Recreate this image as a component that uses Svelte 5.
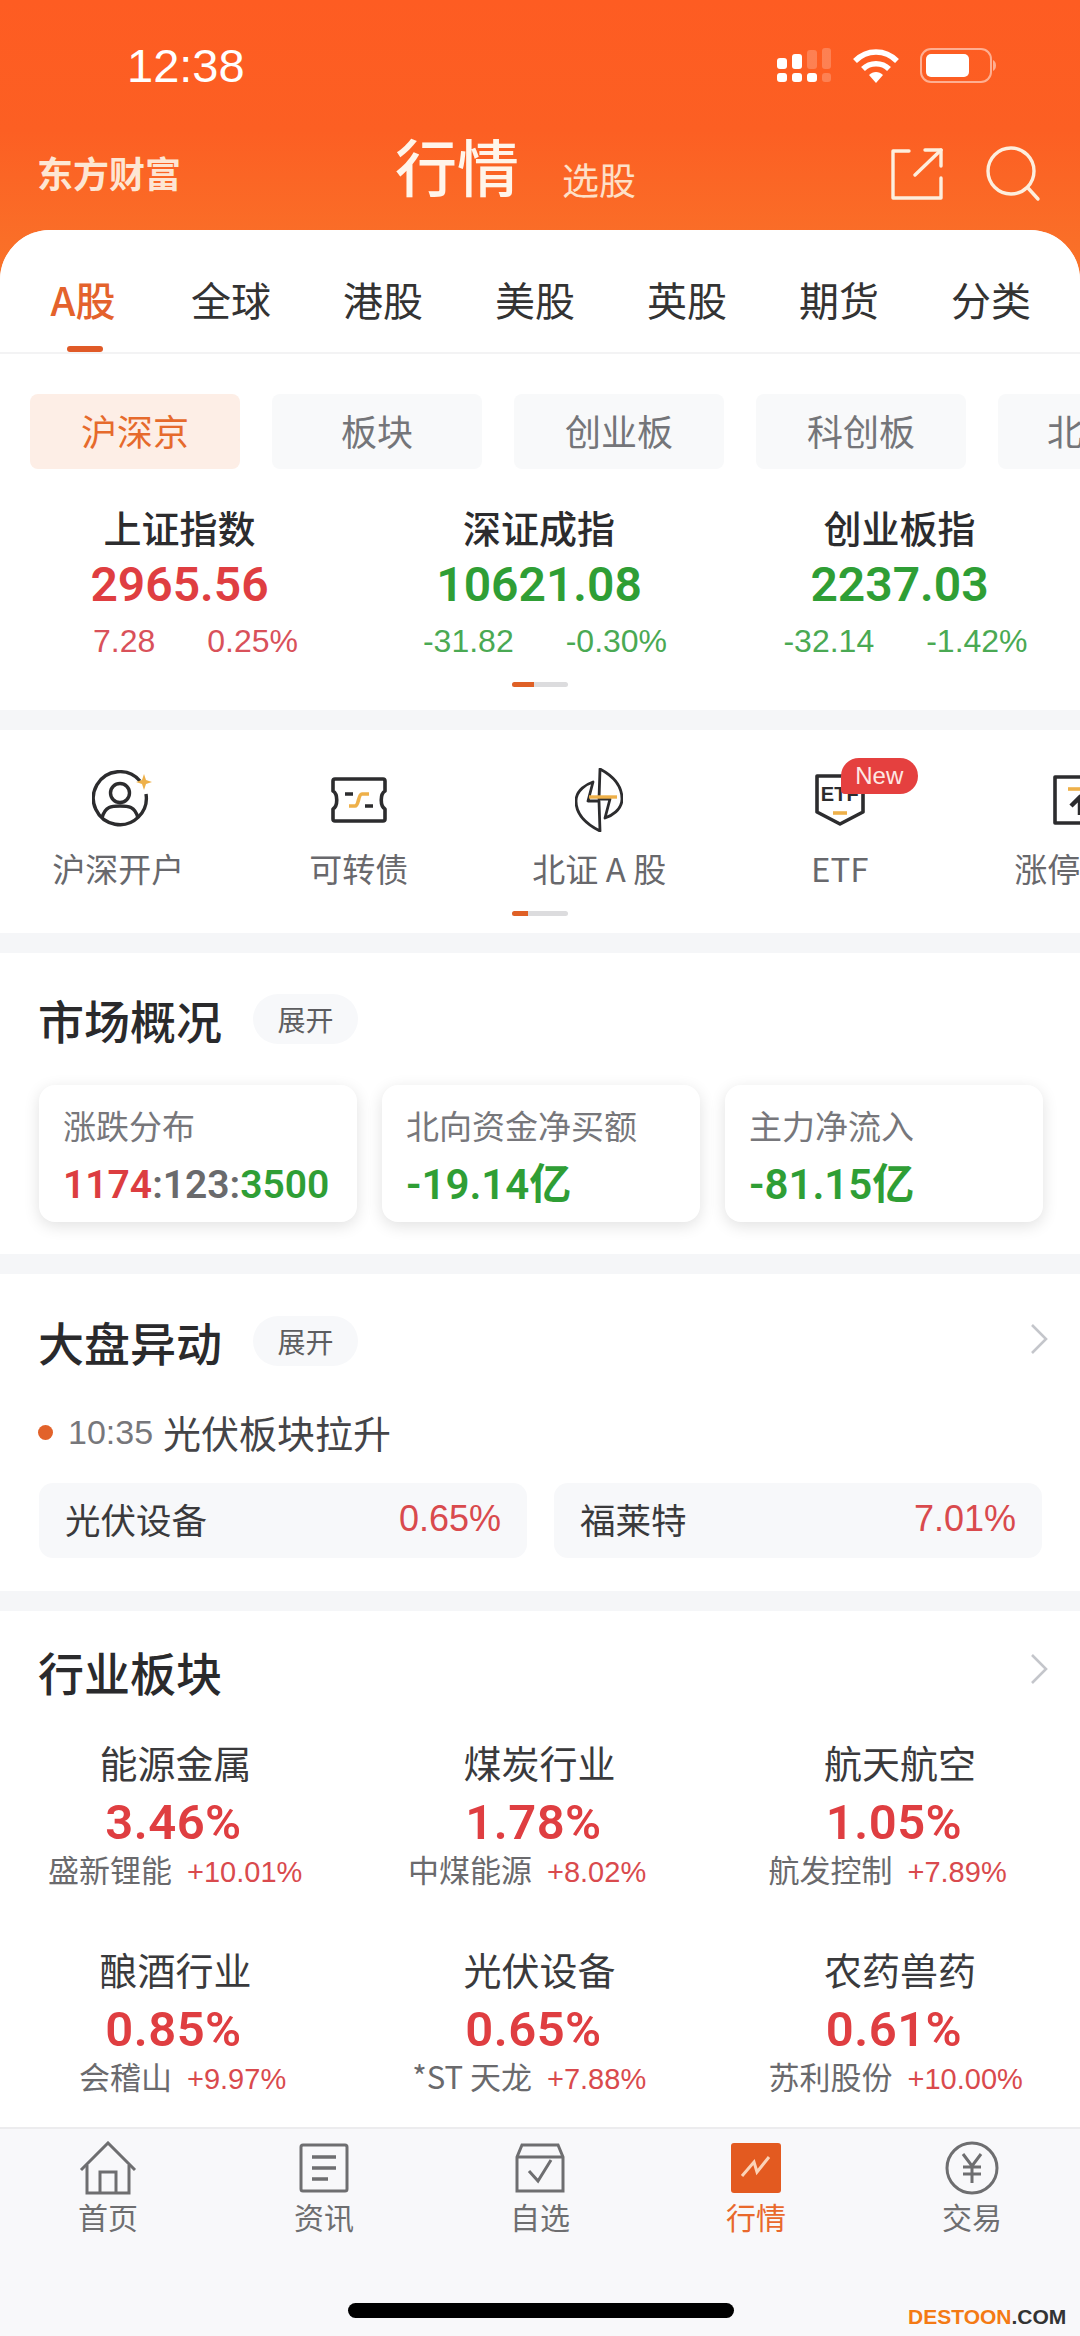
<script>
  const tabs = ['A股', '全球', '港股', '美股', '英股', '期货', '分类'];
  const chips = ['沪深京', '板块', '创业板', '科创板', '北证50'];
  const indexes = [
    { name: '上证指数', value: '2965.56', a: '7.28', b: '0.25%', c: 'up' },
    { name: '深证成指', value: '10621.08', a: '-31.82', b: '-0.30%', c: 'down' },
    { name: '创业板指', value: '2237.03', a: '-32.14', b: '-1.42%', c: 'down' }
  ];
  const cards = [
    { label: '北向资金净买额', value: '-19.14亿' },
    { label: '主力净流入', value: '-81.15亿' }
  ];
  const sectors = [
    { name: '能源金属', pct: '3.46%', stock: '盛新锂能', chg: '+10.01%' },
    { name: '煤炭行业', pct: '1.78%', stock: '中煤能源', chg: '+8.02%' },
    { name: '航天航空', pct: '1.05%', stock: '航发控制', chg: '+7.89%' },
    { name: '酿酒行业', pct: '0.85%', stock: '会稽山', chg: '+9.97%' },
    { name: '光伏设备', pct: '0.65%', stock: '*ST 天龙', chg: '+7.88%' },
    { name: '农药兽药', pct: '0.61%', stock: '苏利股份', chg: '+10.00%' }
  ];
</script>

<div class="page">
  <header class="top">
    <div class="status">
      <span class="time">12:38</span>
      <div class="status-icons">
        <svg width="58" height="34" viewBox="0 0 58 34" fill="#fff">
          <rect x="0" y="10" width="10" height="11" rx="3" /><rect x="15" y="6" width="10" height="15" rx="3" />
          <rect x="30" y="2" width="10" height="19" rx="3" opacity=".22" /><rect x="45" y="0" width="9" height="21" rx="3" opacity=".22" />
          <rect x="0" y="25" width="10" height="9" rx="3" /><rect x="15" y="25" width="10" height="9" rx="3" />
          <rect x="30" y="25" width="10" height="9" rx="3" /><rect x="45" y="25" width="9" height="9" rx="3" opacity=".22" />
        </svg>
        <svg class="wifi" width="48" height="35" viewBox="0 0 48 35" fill="none" stroke="#fff" stroke-width="5.5">
          <path d="M3 13 C15 1 33 1 45 13" /><path d="M11 21 C18 14 30 14 37 21" />
          <path d="M17 27 L24 35 L31 27 C27 23 21 23 17 27Z" fill="#fff" stroke="none" />
        </svg>
        <svg class="batt" width="78" height="35" viewBox="0 0 78 35" fill="none">
          <rect x="1" y="1" width="70" height="33" rx="10" stroke="#fff" stroke-opacity=".5" stroke-width="2" />
          <rect x="6" y="6" width="43" height="23" rx="5" fill="#fff" />
          <path d="M73 12 C77 14 77 21 73 23Z" fill="#fff" fill-opacity=".5" />
        </svg>
      </div>
    </div>
    <nav class="titlebar">
      <span class="logo">东方财富</span>
      <div class="titles">
        <span class="title">行情</span>
        <span class="sub">选股</span>
      </div>
      <div class="actions">
        <svg width="52" height="52" viewBox="0 0 52 52" fill="none" stroke="#fdeedd" stroke-width="3.4" stroke-linecap="round" stroke-linejoin="round">
          <path d="M18 3 H2 V50 H50 V30" /><path d="M24 27 L50 2" /><path d="M34 2 H50 V18" />
        </svg>
        <svg width="56" height="56" viewBox="0 0 56 56" fill="none" stroke="#fdeedd" stroke-width="3.4" stroke-linecap="round">
          <circle cx="25" cy="25" r="23" /><path d="M42 42 L52 53" />
        </svg>
      </div>
    </nav>
  </header>

  <main class="sheet">
    <div class="tabs">
      {#each tabs as t, i}
        <div class="tab" class:on={i === 0}>{t}</div>
      {/each}
    </div>

    <section class="market">
      <div class="chips">
        {#each chips as c, i}
          <div class="chip" class:on={i === 0}>{c}</div>
        {/each}
      </div>
      <div class="indexes">
        {#each indexes as x}
          <div class="index {x.c}">
            <div class="iname">{x.name}</div>
            <div class="ival">{x.value}</div>
            <div class="ichg"><span>{x.a}</span><span>{x.b}</span></div>
          </div>
        {/each}
      </div>
      <div class="pager"><i></i></div>
    </section>

    <section class="shortcuts">
      <div class="scroll">
        <div class="sc first">
          <svg width="62" height="60" viewBox="0 0 62 60" fill="none" stroke="#2c2c2e" stroke-width="3.4">
            <path d="M48 11 A26.5 26.5 0 1 0 54 24" />
            <circle cx="28" cy="23" r="9.5" />
            <path d="M10 48 C13 36 20 36 28 36 C36 36 43 36 46 48" />
            <path d="M52 4 L54 10 L60 12 L54 14 L52 20 L50 14 L44 12 L50 10Z" fill="#eeb049" stroke="none" />
          </svg>
          <span>沪深开户</span>
        </div>
        <div class="sc">
          <svg width="56" height="46" viewBox="0 0 56 46" fill="none" stroke="#2c2c2e" stroke-width="3.6" stroke-linejoin="round">
            <path d="M4 2 H52 Q54 2 54 4 V14 C49 17 49 29 54 32 V42 Q54 44 52 44 H4 Q2 44 2 42 V32 C7 29 7 17 2 14 V4 Q2 2 4 2Z" />
            <path d="M14 17 H22 M34 29 H42" />
            <path d="M18 29 H24 C28 29 27 17 31 17 H38" stroke="#eeb049" />
          </svg>
          <span>可转债</span>
        </div>
        <div class="sc">
          <svg width="48" height="64" viewBox="0 0 48 64" fill="none" stroke="#2c2c2e" stroke-width="2.8" stroke-linejoin="round">
            <path d="M25 1 C40 9 47 20 47 31 C47 42 36 48 30 50 L35 31 H24 Z" />
            <path d="M25 63 C9 55 1 44 1 33 C1 22 12 16 18 14 L13 33 H24 Z" />
            <path d="M14 29 H42" stroke="#eeb049" stroke-width="3.4" />
          </svg>
          <span>北证 A 股</span>
        </div>
        <div class="sc">
          <div class="etf">
            <svg width="50" height="52" viewBox="0 0 50 52" fill="none" stroke="#2c2c2e" stroke-width="3.6" stroke-linejoin="round">
              <path d="M2 2 H48 V38 L25 50 L2 38Z" />
              <path d="M18 39 H32" stroke="#eeb049" stroke-width="3.6" />
            </svg>
            <span class="etf-t">ETF</span>
            <span class="new">New</span>
          </div>
          <span>ETF</span>
        </div>
        <div class="sc">
          <svg width="54" height="50" viewBox="0 0 54 50" fill="none" stroke="#2c2c2e" stroke-width="3.6" stroke-linejoin="round">
            <path d="M2 2 H52 V48 H2Z" />
            <path d="M15 14 H39" stroke="#eeb049" />
            <path d="M27 40 V24 M18 31 L27 22 L36 31" stroke-width="4.5" />
          </svg>
          <span>涨停分析</span>
        </div>
      </div>
      <div class="pager short"><i></i></div>
    </section>

    <section class="overview">
      <div class="head"><h2>市场概况</h2><span class="pill">展开</span></div>
      <div class="cards">
        <div class="card">
          <div class="clabel">涨跌分布</div>
          <div class="cval dist"><b class="r">1174</b><b class="g">:123:</b><b class="d">3500</b></div>
        </div>
        {#each cards as c}
          <div class="card">
            <div class="clabel">{c.label}</div>
            <div class="cval"><b class="d">{c.value}</b></div>
          </div>
        {/each}
      </div>
    </section>

    <section class="moves">
      <div class="head">
        <h2>大盘异动</h2><span class="pill">展开</span>
        <svg class="chev" width="18" height="32" viewBox="0 0 18 32" fill="none" stroke="#c4c6cb" stroke-width="2.6"><path d="M2 2 L16 16 L2 30" /></svg>
      </div>
      <div class="event"><i class="dot"></i><span class="etime">10:35</span><span class="etext">光伏板块拉升</span></div>
      <div class="rows">
        <div class="row"><span>光伏设备</span><em>0.65%</em></div>
        <div class="row"><span>福莱特</span><em>7.01%</em></div>
      </div>
    </section>

    <section class="sectors">
      <div class="head">
        <h2>行业板块</h2>
        <svg class="chev" width="18" height="32" viewBox="0 0 18 32" fill="none" stroke="#c4c6cb" stroke-width="2.6"><path d="M2 2 L16 16 L2 30" /></svg>
      </div>
      <div class="grid">
        {#each sectors as s}
          <div class="sector">
            <div class="sname">{s.name}</div>
            <div class="spct">{s.pct}</div>
            <div class="ssub"><span>{s.stock}</span><em>{s.chg}</em></div>
          </div>
        {/each}
      </div>
    </section>
  </main>

  <footer class="bar">
    <div class="items">
      <div class="item">
        <svg width="58" height="54" viewBox="0 0 58 54" fill="none" stroke="#6e6e70" stroke-width="3">
          <path d="M2 29 L29 2 L56 29" /><path d="M8 24 V52 H50 V24" /><path d="M21 52 V31 H37 V52" />
        </svg>
        <span>首页</span>
      </div>
      <div class="item">
        <svg width="50" height="50" viewBox="0 0 50 50" fill="none" stroke="#6e6e70" stroke-width="3">
          <rect x="2" y="2" width="46" height="46" rx="2" /><path d="M13 14 H37 M13 25 H37 M13 36 H29" stroke-width="3.4" />
        </svg>
        <span>资讯</span>
      </div>
      <div class="item">
        <svg width="50" height="50" viewBox="0 0 50 50" fill="none" stroke="#6e6e70" stroke-width="3">
          <path d="M2 14 L7 2 H43 L48 14 V48 H2Z" /><path d="M2 14 H48" /><path d="M14 28 L23 38 L36 17" />
        </svg>
        <span>自选</span>
      </div>
      <div class="item on">
        <svg width="50" height="50" viewBox="0 0 50 50">
          <rect width="50" height="50" rx="3" fill="#e35a20" />
          <path d="M11 33 L23 19 L26 29 L38 14" fill="none" stroke="#fbd3b8" stroke-width="3" />
        </svg>
        <span>行情</span>
      </div>
      <div class="item">
        <svg width="54" height="54" viewBox="0 0 54 54" fill="none" stroke="#6e6e70" stroke-width="3">
          <circle cx="27" cy="27" r="25" /><path d="M18 13 L27 25 L36 13 M27 25 V42 M18 26 H36 M18 33 H36" />
        </svg>
        <span>交易</span>
      </div>
    </div>
    <div class="home"></div>
    <div class="mark"><span>DESTOON</span><b>.COM</b></div>
  </footer>
</div>

<style>
  :global(body) { margin: 0; background: #fff; }
  .page {
    width: 1080px; height: 2336px; overflow: hidden; display: flex; flex-direction: column;
    font-family: "Roboto", "Liberation Sans", "Noto Sans CJK SC", sans-serif; color: #2c2c2e;
  }
  .top {
    height: 290px; box-sizing: border-box; flex: none; padding-top: 30px;
    background: linear-gradient(180deg, #fe5c22 0%, #fc5f23 45%, #f9752a 100%); color: #fff;
  }
  .status { height: 70px; display: flex; align-items: center; justify-content: space-between; padding: 0 82px 0 127px; }
  .time { font: 500 47px/1 "Liberation Sans", sans-serif; }
  .status-icons { display: flex; align-items: center; gap: 0; }
  .wifi { margin-left: 17px; }
  .batt { margin-left: 20px; }
  .titlebar { display: flex; align-items: center; height: 80px; margin-top: 34px; padding: 0 38px; position: relative; }
  .logo { font: 700 36px/1 "Noto Sans CJK SC", sans-serif; color: #fde6d3; margin-bottom: 4px; margin-left: -1px; }
  .titles { display: flex; align-items: baseline; margin-left: 214px; margin-bottom: 18px; }
  .title { font: 500 62px/1 "Noto Sans CJK SC", sans-serif; color: #fff5ea; }
  .sub { font: 400 37px/1 "Noto Sans CJK SC", sans-serif; color: #fde0c8; margin-left: 43px; transform: translateY(3px); }
  .actions { margin-left: auto; display: flex; gap: 43px; align-items: center; margin-right: 0; }

  .sheet { flex: 1; min-height: 0; margin-top: -60px; background: #f5f6f8; border-radius: 50px 50px 0 0; overflow: hidden; display: flex; flex-direction: column; gap: 20px; }
  section { background: #fff; flex: none; box-sizing: border-box; }
  .tabs { height: 124px; flex: none; background: #fff; display: flex; border-bottom: 2px solid #f3f3f4; box-sizing: border-box; padding: 0 0 0 11px; margin-bottom: -20px; }
  .tab { width: 152px; text-align: center; font: 400 40px/1 "Noto Sans CJK SC", sans-serif; padding-top: 49px; position: relative; color: #333; }
  .tab:first-child { width: 144px; }
  .tab.on { color: #e4622c; font-weight: 500; }
  .tab.on::after { content: ""; position: absolute; left: 56px; bottom: 0; width: 36px; height: 6px; border-radius: 3px; background: #e05a27; }

  .market { height: 356px; padding-top: 40px; }
  .chips { display: flex; gap: 32px; padding-left: 30px; white-space: nowrap; overflow: hidden; }
  .chip { flex: none; width: 210px; height: 75px; border-radius: 8px; background: #f8f9fa; color: #747579; font: 400 36px/73px "Noto Sans CJK SC", sans-serif; text-align: center; }
  .chip.on { background: #fdeee6; color: #e66a2c; }
  .indexes { display: grid; grid-template-columns: 359px 360px 361px; margin-top: 37px; }
  .index { text-align: center; }
  .iname { font: 500 38px/1.1 "Noto Sans CJK SC", sans-serif; color: #2c2c2e; }
  .ival { font: 600 48px/49px "Roboto", sans-serif; margin-top: 12px; }
  .ichg { display: flex; justify-content: center; gap: 52px; padding-left: 12px; font: 400 32px/1 "Liberation Sans", sans-serif; margin-top: 16px; }
  .index.up .ival { color: #df3e41; } .index.up .ichg { color: #d9515a; }
  .index.down .ival { color: #2f9e35; } .index.down .ichg { color: #4aa953; }
  .index:first-child .ichg { padding-left: 32px; }
  .pager { width: 56px; height: 5px; margin: 25px auto 0; background: #dcdcde; border-radius: 3px; overflow: hidden; }
  .pager i { display: block; width: 22px; height: 100%; background: #df6026; }
  .pager.short i { width: 16px; }

  .shortcuts { height: 203px; position: relative; overflow: hidden; }
  .scroll { display: flex; height: 180px; margin-left: -2px; }
  .sc { flex: none; width: 240.5px; height: 180px; display: flex; flex-direction: column; align-items: center; justify-content: flex-end; position: relative; }
  .sc > svg, .etf { position: absolute; left: 50%; transform: translate(-50%, -50%); top: 70px; }
  .sc.first > svg { left: calc(50% + 5px); }
  .sc > span { font: 400 33px/1 "Noto Sans CJK SC", sans-serif; color: #68686c; padding-bottom: 25px; white-space: nowrap; }
  .etf { width: 50px; height: 52px; }
  .etf svg { display: block; }
  .etf-t { position: absolute; left: 0; right: 0; top: 10px; text-align: center; font: 700 20px/1 "Liberation Sans", sans-serif; color: #2c2c2e; }
  .etf .new { position: absolute; left: 26px; top: -16px; width: 77px; height: 36px; border-radius: 18px 18px 18px 4px; background: #e5403f; color: #fde8e4; font: 400 24px/36px "Liberation Sans", sans-serif; text-align: center; }
  .pager.short { position: absolute; left: 512px; top: 181px; margin: 0; }

  .overview { height: 301px; padding: 41px 37px 0 38px; }
  .head { display: flex; align-items: center; height: 50px; }
  h2 { margin: 0; font: 500 46px/1 "Noto Sans CJK SC", sans-serif; color: #2a2a2c; }
  .pill { margin-left: 31px; width: 105px; height: 50px; border-radius: 25px; background: #f7f8fa; color: #5d5d60; font: 400 28px/50px "Noto Sans CJK SC", sans-serif; text-align: center; flex: none; }
  .cards { display: grid; grid-template-columns: repeat(3, 318px); gap: 25px; margin: 41px 0 0 1px; }
  .card { height: 137px; box-sizing: border-box; padding: 21px 24px 0; background: #fff; border-radius: 16px; box-shadow: 0 4px 16px rgba(0,0,0,.12); }
  .clabel { font: 400 33px/1.2 "Noto Sans CJK SC", sans-serif; color: #77777b; }
  .cval { font: 600 42px/42px "Roboto", "Noto Sans CJK SC", sans-serif; margin-top: 18px; white-space: nowrap; }
  .cval b { font-weight: 600; }
  .dist { font-size: 39px; }
  .r { color: #dc3d40; } .g { color: #6a6a6c; } .d { color: #2f9e35; }

  .moves { height: 317px; padding: 42px 39px 0 38px; }
  .chev { margin-left: auto; margin-right: -7px; transform: translateY(-2px); }
  .event { display: flex; align-items: center; margin-top: 41px; height: 50px; margin-left: 1px; }
  .dot { width: 15px; height: 15px; border-radius: 50%; background: #e2622a; margin-left: -1px; }
  .etime { font: 400 34px/1 "Liberation Sans", sans-serif; color: #77777b; margin-left: 15px; }
  .etext { font: 400 38px/1 "Noto Sans CJK SC", sans-serif; color: #444447; margin-left: 10px; }
  .rows { display: grid; grid-template-columns: 488px 488px; gap: 27px; margin: 26px 0 0 1px; }
  .row { height: 75px; box-sizing: border-box; padding: 0 26px 3px; border-radius: 14px; background: #f7f8fa; display: flex; align-items: center; justify-content: space-between; font: 400 35.5px/1 "Noto Sans CJK SC", sans-serif; color: #3a3a3c; }
  .row em { font: 400 36px/1 "Liberation Sans", sans-serif; font-style: normal; color: #d94a4d; }

  .sectors { flex: 1; padding: 35px 39px 0 38px; }
  .grid { display: grid; grid-template-columns: 359px 361px 360px; margin: 45px 0 0 -38px; row-gap: 61px; width: 1080px; }
  .sector { text-align: center; }
  .sname { font: 400 38px/1.1 "Noto Sans CJK SC", sans-serif; color: #3a3a3c; }
  .sector:nth-child(3n+1) .sname { padding-right: 8px; }
  .spct { font: 600 49px/1 "Roboto", sans-serif; letter-spacing: .5px; color: #df3e41; margin-top: 15px; padding-right: 12px; }
  .ssub { display: grid; grid-template-columns: 1fr 1fr; column-gap: 15px; align-items: baseline; margin-top: 5px; font: 400 31px/1.1 "Noto Sans CJK SC", sans-serif; color: #6a6a6d; white-space: nowrap; }
  .ssub span { text-align: right; }
  .ssub em { text-align: left; font: 400 29px/1 "Liberation Sans", sans-serif; font-style: normal; color: #d94a4d; }

  .bar { height: 209px; flex: none; background: #f8f8fa; border-top: 2px solid #ececee; box-sizing: border-box; position: relative; }
  .items { display: grid; grid-template-columns: repeat(5, 216px); padding-top: 12px; }
  .item { display: flex; flex-direction: column; align-items: center; }
  .item svg { height: 54px; }
  .item span { font: 400 30px/1 "Noto Sans CJK SC", sans-serif; color: #6e6e70; margin-top: 6px; }
  .item.on span { color: #e9692c; }
  .home { width: 386px; height: 15px; border-radius: 8px; background: #000; position: absolute; left: 348px; top: 174px; }
  .mark { position: absolute; left: 908px; top: 177px; font: 700 21px/1 "Liberation Sans", sans-serif; white-space: nowrap; }
  .mark span { color: #f47a14; } .mark b { color: #333; }
</style>
